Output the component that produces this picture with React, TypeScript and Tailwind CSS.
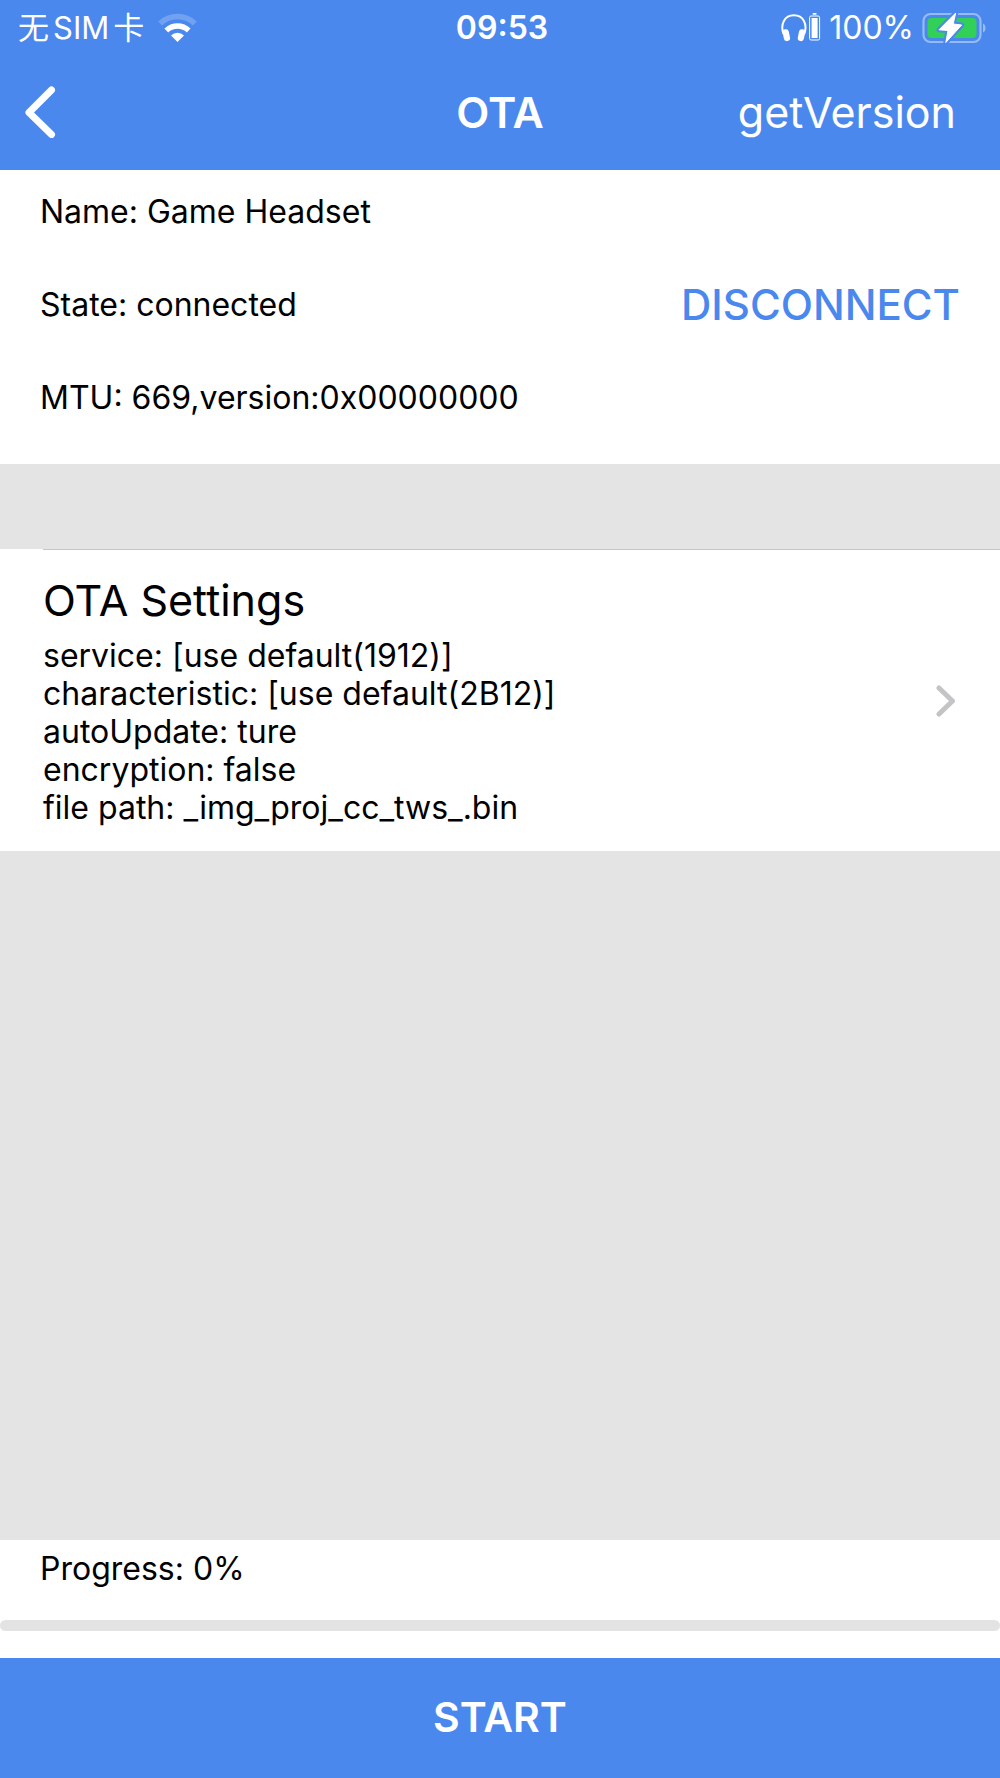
import { useState } from "react";

const settings = [
  { label: "service", value: "[use default(1912)]" },
  { label: "characteristic", value: "[use default(2B12)]" },
  { label: "autoUpdate", value: "ture" },
  { label: "encryption", value: "false" },
  { label: "file path", value: "_img_proj_cc_tws_.bin" },
];

function WifiIcon() {
  return (
    <svg width="40" height="30" viewBox="0 0 40 30" fill="none" aria-hidden="true">
      <path d="M2.100 10.400a25.500 25.500 0 0 1 34.800 0" stroke="#fff" strokeOpacity="0.220" strokeWidth="5.500" />
      <path d="M8.300 17.400a16.500 16.500 0 0 1 22.400 0" stroke="#fff" strokeWidth="5.500" />
      <path d="M19.500 29l-6.500-6.600a9.500 9.500 0 0 1 13 0z" fill="#fff" />
    </svg>
  );
}

function HeadphonesIcon() {
  return (
    <svg width="40" height="30" viewBox="0 -1 40 30" fill="none" aria-hidden="true">
      <path d="M2.500 20C-1 10 3.500 1.300 12.900 1.300S26.800 10 23.300 20" stroke="#fff" strokeWidth="2" />
      <rect x="2.200" y="15.200" width="6.200" height="12" rx="3" fill="#fff" transform="rotate(-12 5.300 21)" />
      <rect x="17.400" y="15.200" width="6.200" height="12" rx="3" fill="#fff" transform="rotate(12 20.500 21)" />
      <rect x="28.600" y="2" width="10" height="24" rx="1.500" stroke="#fff" />
      <rect x="30.600" y="4" width="6" height="20" fill="#fff" />
      <rect x="31.600" y="-1" width="4" height="1.800" rx="0.700" fill="#fff" />
    </svg>
  );
}

function BatteryIcon() {
  const bolt = "M33.700 1L17 17.800l9 .7L23.800 30.500 39.700 13l-8.500-1z";
  return (
    <svg width="64" height="32" viewBox="0 0 64 32" fill="none" aria-hidden="true">
      <rect x="1.500" y="2" width="57" height="28" rx="7" stroke="#fff" strokeOpacity="0.420" strokeWidth="2.200" />
      <path d="M61 11.500c3.300 1.300 3.300 7.700 0 9z" fill="#fff" fillOpacity="0.450" />
      <rect x="5.500" y="6" width="49" height="20" rx="4" fill="#31d158" />
      <path d={bolt} fill="#4a88ee" stroke="#4a88ee" strokeWidth="5" strokeLinejoin="round" />
      <path d={bolt} fill="#fff" stroke="#fff" strokeLinejoin="round" />
    </svg>
  );
}

function StatusBar() {
  return (
    <div className="grid h-14 grid-cols-[1fr_auto_1fr] items-center pr-[14px] pl-[18px] text-[32px]">
      <div className="flex items-center gap-[14px]">
        <div className="flex gap-1 text-[31px]">
          <span>无</span>
          <span>SIM</span>
          <span>卡</span>
        </div>
        <WifiIcon />
      </div>
      <span className="font-semibold">09:53</span>
      <div className="flex items-center justify-end gap-2">
        <HeadphonesIcon />
        <span>100%</span>
        <BatteryIcon />
      </div>
    </div>
  );
}

export default function App() {
  const [progress, setProgress] = useState(0);
  const [connected, setConnected] = useState(true);

  return (
    <div className="flex min-h-dvh flex-col bg-[#e4e4e4] font-[Inter,'Noto_Sans_CJK_SC',sans-serif] text-black">
      <header className="bg-[#4a88ee] text-white">
        <StatusBar />
        <nav className="grid h-[114px] grid-cols-[1fr_auto_1fr] items-center px-6 pb-0.5">
          <button type="button" aria-label="Back" className="justify-self-start">
            <svg width="32" height="52" viewBox="0 0 32 52" fill="none" aria-hidden="true">
              <path
                d="M27.500 4L5 26.500l22.500 22"
                stroke="#fff"
                strokeWidth="7"
                strokeLinecap="round"
                strokeLinejoin="round"
              />
            </svg>
          </button>
          <h1 className="text-[43px] font-semibold">OTA</h1>
          <button type="button" className="justify-self-end pr-5 text-[43px]">
            getVersion
          </button>
        </nav>
      </header>

      <section className="flex flex-col gap-[45px] bg-white px-10 pt-[18px] pb-[42px] text-[32px] leading-[48px]">
        <p>Name: Game Headset</p>
        <div className="flex items-center justify-between">
          <p>State: {connected ? "connected" : "disconnected"}</p>
          <button
            type="button"
            onClick={() => setConnected(!connected)}
            className="text-[42px] font-medium text-[#4a88ee]"
          >
            {connected ? "DISCONNECT" : "CONNECT"}
          </button>
        </div>
        <p>MTU: 669,version:0x00000000</p>
      </section>

      <section className="mt-[85px] bg-white">
        <div className="ml-[43px] h-px bg-[#c6c6c6]" />
        <button type="button" className="flex w-full items-center justify-between pr-11 pl-[43px] text-left">
          <div className="pt-[18px] pb-6">
            <h2 className="mb-[5px] text-[43px] leading-[64px]">OTA Settings</h2>
            <ul className="text-[32px] leading-[38px]">
              {settings.map((item) => (
                <li key={item.label}>
                  {item.label}: {item.value}
                </li>
              ))}
            </ul>
          </div>
          <svg width="20" height="32" viewBox="0 0 20 32" fill="none" aria-hidden="true">
            <path d="M3 3l13.500 13L3 29" stroke="#c4c4c6" strokeWidth="5" strokeLinecap="round" strokeLinejoin="round" />
          </svg>
        </button>
      </section>

      <footer className="mt-auto">
        <div className="flex flex-col bg-white pt-[5px] pb-[27px]">
          <label htmlFor="ota-progress" className="px-10 pb-[27px] text-[32px] leading-[48px]">
            Progress: {progress}%
          </label>
          <progress
            id="ota-progress"
            max={100}
            value={progress}
            className="h-[11px] w-full appearance-none overflow-hidden rounded-full bg-[#e3e3e3] [&::-webkit-progress-bar]:bg-[#e3e3e3] [&::-webkit-progress-value]:bg-[#4a88ee]"
          />
        </div>
        <button
          type="button"
          onClick={() => setProgress(0)}
          className="h-[120px] w-full bg-[#4a88ee] text-[41px] font-semibold text-white"
        >
          START
        </button>
      </footer>
    </div>
  );
}
